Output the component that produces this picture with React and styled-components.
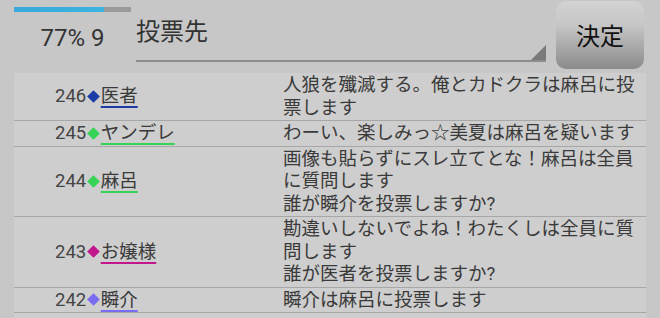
import React from "react";
import styled, { createGlobalStyle } from "styled-components";

const GlobalStyle = createGlobalStyle`
  html, body {
    margin: 0;
    padding: 0;
    background: #c7c7c7;
    font-family: Roboto, "Noto Sans CJK JP", sans-serif;
    overflow: hidden;
  }
`;

const votes = [
  { no: 246, name: "医者", color: "#1d3ba6", text: "人狼を殲滅する。俺とカドクラは麻呂に投票します" },
  { no: 245, name: "ヤンデレ", color: "#35d457", text: "わーい、楽しみっ☆美夏は麻呂を疑います" },
  {
    no: 244,
    name: "麻呂",
    color: "#35d457",
    text: "画像も貼らずにスレ立てとな！麻呂は全員に質問します\n誰が瞬介を投票しますか?",
  },
  {
    no: 243,
    name: "お嬢様",
    color: "#c2168d",
    text: "勘違いしないでよね！わたくしは全員に質問します\n誰が医者を投票しますか?",
  },
  { no: 242, name: "瞬介", color: "#7a6cf0", text: "瞬介は麻呂に投票します" },
];

const App = () => {
  const progress = 77;
  return (
    <Page>
      <GlobalStyle />
      <Header>
        <Status>
          <Progress>
            <ProgressFill style={{ width: `${progress}%` }} />
          </Progress>
          <StatusText>{progress}% 9</StatusText>
        </Status>
        <Spinner>
          <SpinnerLabel>投票先</SpinnerLabel>
          <SpinnerCorner />
        </Spinner>
        <DecideButton>決定</DecideButton>
      </Header>
      <List>
        {votes.map((v) => (
          <Row key={v.no}>
            <Speaker>
              {v.no}
              <Diamond color={v.color} />
              <Name color={v.color}>{v.name}</Name>
            </Speaker>
            <Message>{v.text}</Message>
          </Row>
        ))}
      </List>
    </Page>
  );
};

const Page = styled.div`
  width: 660px;
  height: 318px;
  overflow: hidden;
  display: flex;
  flex-direction: column;
`;
const Header = styled.div`
  height: 73px;
  display: flex;
  padding-left: 14px;
  box-sizing: border-box;
`;
const Status = styled.div`
  width: 117px;
  padding-top: 7px;
  display: flex;
  flex-direction: column;
`;
const Progress = styled.div`
  height: 5px;
  background: #9a9a9a;
`;
const ProgressFill = styled.div`
  height: 100%;
  background: linear-gradient(90deg, #38a9d8 0%, #3cb4e0 100%);
`;
const StatusText = styled.div`
  margin-top: 11px;
  text-align: center;
  font-size: 24px;
  line-height: 30px;
  color: #333;
`;
const Spinner = styled.div`
  position: relative;
  width: 410px;
  height: 60px;
  margin-left: 5px;
  border-bottom: 2px solid #8c8c8c;
`;
const SpinnerLabel = styled.div`
  font-size: 24px;
  line-height: 30px;
  padding-top: 17px;
  color: #333;
`;
const SpinnerCorner = styled.div`
  position: absolute;
  right: 0;
  bottom: 0;
  width: 0;
  height: 0;
  border-left: 15px solid transparent;
  border-bottom: 15px solid #7a7a7a;
`;
const DecideButton = styled.div`
  width: 88px;
  height: 68px;
  margin: 1px 0 0 10px;
  border-radius: 10px;
  background: linear-gradient(180deg, #d3d3d3 0%, #c6c6c6 35%, #8b8b8b 100%);
  display: flex;
  align-items: center;
  justify-content: center;
  font-size: 24px;
  color: #111;
  padding-bottom: 2px;
  box-sizing: border-box;
`;
const List = styled.div`
  flex: 1;
  margin: 0 14px;
  background: #cecece;
`;
const Row = styled.div`
  display: grid;
  grid-template-columns: 269px 1fr;
  border-bottom: 1px solid #a7a7a7;
  padding: 1px 0;
  font-size: 18.5px;
  line-height: 22.5px;
`;
const Speaker = styled.div`
  padding-left: 41px;
  display: flex;
  align-items: center;
  color: #444;
  white-space: nowrap;
`;
const Diamond = styled.span`
  display: inline-block;
  width: 9px;
  height: 9px;
  margin: 0 2.5px 0 3px;
  background: ${(props) => props.color};
  transform: rotate(45deg);
`;
const Name = styled.span`
  color: #3a3a3a;
  text-decoration: underline;
  text-decoration-color: ${(props) => props.color};
  text-decoration-thickness: 2px;
  text-underline-offset: 4px;
`;
const Message = styled.div`
  padding-right: 6px;
  color: #3a3a3a;
  white-space: pre-line;
`;

export default App;
